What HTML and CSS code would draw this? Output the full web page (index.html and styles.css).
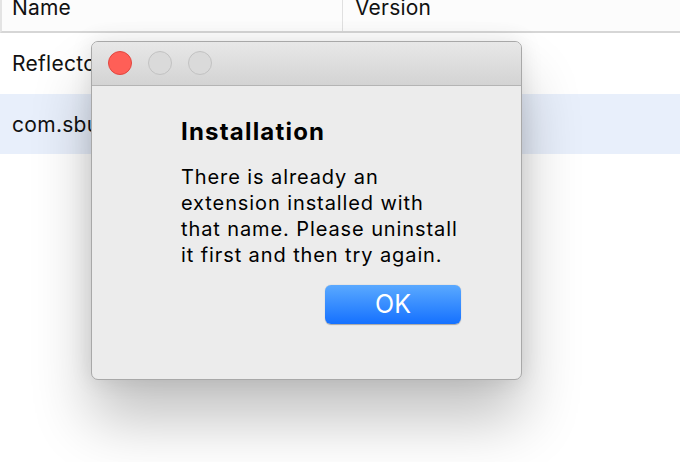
FILE: index.html
```html
<!DOCTYPE html>
<html>
<head>
<meta charset="utf-8">
<link rel="stylesheet" href="styles.css">
</head>
<body>
<div class="table">
  <div class="head">
    <div class="hcell name">Name</div>
    <div class="hcell version">Version</div>
  </div>
  <div class="row">Reflector</div>
  <div class="row sel">com.sbunknown</div>
</div>
<div class="dialog">
  <div class="titlebar">
    <span class="light red"></span>
    <span class="light"></span>
    <span class="light"></span>
  </div>
  <div class="body">
    <h1 class="title">Installation</h1>
    <p class="msg">There is already an<br>extension installed with<br>that name. Please uninstall<br>it first and then try again.</p>
    <div class="actions"><button class="ok">OK</button></div>
  </div>
</div>
</body>
</html>
```
FILE: styles.css
```css
html, body { margin: 0; padding: 0; }
body {
  width: 680px; height: 462px; overflow: hidden; position: relative;
  background: #fff;
  font-family: Inter, "Noto Sans", sans-serif;
  color: #111;
}
.table { display: flex; flex-direction: column; }
.head {
  display: flex; height: 31px;
  border-bottom: 2px solid #d6d6d6;
  border-left: 2px solid #e4e4e4;
  background: #fcfcfc;
}
.hcell { font-size: 21px; line-height: 21px; margin-top: -3px; padding-left: 10px; letter-spacing: 0.2px; }
.name { width: 341px; border-right: 1px solid #e0e0e0; height: 34px; box-sizing: border-box; }
.version { padding-left: 12px; }
.row { height: 61px; display: flex; align-items: center; padding-left: 12px; font-size: 21px; letter-spacing: 0.3px; }
.row.sel { background: #e8effb; height: 60px; }

.dialog {
  position: absolute; left: 91px; top: 41px; width: 431px; height: 339px;
  background: #ececec; border-radius: 7px;
  border: 1px solid #a8a8a8; box-sizing: border-box;
  box-shadow: 0 40px 60px rgba(0,0,0,0.24), 0 0 22px rgba(0,0,0,0.10);
  overflow: hidden;
  display: flex; flex-direction: column;
}
.titlebar {
  height: 44px; flex: none; box-sizing: border-box;
  background: linear-gradient(#e8e8e8, #d3d3d3);
  border-bottom: 1px solid #b4b4b4;
  display: flex; align-items: center; gap: 16px; padding-left: 16px; padding-bottom: 1px;
}
.light {
  width: 24px; height: 24px; border-radius: 50%; box-sizing: border-box;
  border: 1px solid #c2c2c2; background: #dadada;
}
.light.red { background: #ff5f57; border-color: #e2463f; }
.body { padding: 31px 40px 0 89px; }
.title { margin: 0; font-size: 24px; font-weight: 700; line-height: 30px; color: #000; letter-spacing: 1.2px; }
.msg { margin: 17px 0 0; font-size: 20px; line-height: 26px; color: #000; letter-spacing: 0.9px; white-space: nowrap; }
.actions { display: flex; justify-content: flex-end; margin-top: 17px; padding-right: 20px; }
.ok {
  width: 136px; height: 39px; border-radius: 6px; border: none;
  background: linear-gradient(#5aa9ff, #1571ff);
  box-shadow: 0 0.5px 1px rgba(0,0,0,0.3);
  color: #fff; font-family: inherit; font-size: 25px; line-height: 39px; padding: 0;
}
```
